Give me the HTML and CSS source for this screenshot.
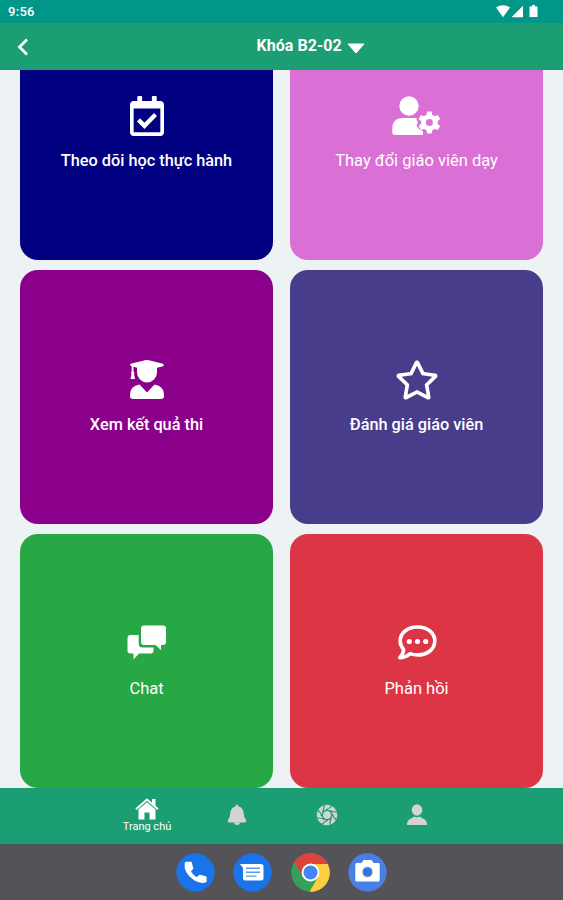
FILE: index.html
```html
<!DOCTYPE html>
<html lang="vi">
<head>
<meta charset="utf-8">
<title>Khóa B2-02</title>
<link rel="stylesheet" href="styles.css">
</head>
<body>
<div class="status">
  <span>9:56</span>
  <svg width="44" height="16" viewBox="0 0 44 16" fill="#fff">
    <path d="M0 3.400Q7 -1 14 3.400L7 13.300Z"/><path d="M15.500 13.300H27V1.800Z"/><path d="M33.500 2.500H36V1H39V2.500H41.500V13H33.500Z"/>
  </svg>
</div>
<header class="appbar">
  <svg class="back" width="12" height="18" viewBox="0 0 12 18"><path d="M10 1.500L2.500 9L10 16.500" fill="none" stroke="#fff" stroke-width="2.800"/></svg>
  <h1>Khóa B2-02</h1>
  <svg class="caret" width="18" height="11" viewBox="0 0 18 11"><path d="M1 1H17L9 10Z" fill="#fff" stroke="#fff" stroke-linejoin="round"/></svg>
</header>
<main class="content">
  <div class="grid">
    <a class="card navy">
      <svg width="34" height="40" viewBox="0 0 448 512" preserveAspectRatio="none" fill="#fff"><path d="M400 64h-48V12c0-7-5-12-12-12h-40c-7 0-12 5-12 12v52H160V12c0-7-5-12-12-12h-40c-7 0-12 5-12 12v52H48C21 64 0 85 0 112v352c0 27 21 48 48 48h352c27 0 48-21 48-48V112c0-27-21-48-48-48zm-6 400H54a6 6 0 0 1-6-6V160h352v298a6 6 0 0 1-6 6z"/><path d="M112 306L190 382L336 236" fill="none" stroke="#fff" stroke-width="56"/></svg>
      <span class="strong">Theo dõi học thực hành</span>
    </a>
    <a class="card orchid">
      <svg width="49" height="40" viewBox="0 0 49 40" fill="#fff"><circle cx="17" cy="10" r="9.700"/><path d="M10 22H24.500Q24 24 26 26L24.500 30L28 34L31 35V39H3Q.3 39 .3 36.500V32Q.5 22.500 10 22Z"/><path fill-rule="evenodd" d="M35.200 15.500H39.600L40.300 18.800L42.600 20.200L45.800 19.100L48.100 23L45.600 25.300V27.800L48.100 30L45.800 34L42.600 33L40.300 34.300L39.600 37.500H35.200L34.400 34.300L32.100 33L28.900 34L26.600 30L29.100 27.800V25.300L26.600 23L28.900 19.100L32.100 20.200L34.400 18.800ZM37.400 23A3.500 3.500 0 1 0 37.400 30A3.500 3.500 0 1 0 37.400 23Z"/></svg>
      <span>Thay đổi giáo viên dạy</span>
    </a>
    <a class="card purple">
      <svg width="36" height="40" viewBox="0 0 36 40" fill="#fff"><path d="M1.500 3.700L16 .3Q18 -.1 20 .3L34 3.700Q35.500 5 34 6.300L28 7.800V12.500A10 10 0 0 1 8 12.500V7.800L4.500 6.800V11.500Q6 12.500 5 14L6 19H1.500L2.500 14Q1.500 12.500 2.700 11.500V6.500Q.2 5 1.500 3.700Z"/><path d="M10.500 24.500L18 32.500L25.500 24.500Q35 26 35 35V36Q35 39 32 39H4Q1 39 1 36V35Q1 26 10.500 24.500Z"/></svg>
      <span class="strong">Xem kết quả thi</span>
    </a>
    <a class="card slate">
      <svg width="44" height="40" viewBox="0 0 576 512" fill="#fff"><path d="M528.1 171.500L382 150.200 316.700 17.800c-11.700-23.600-45.600-23.900-57.400 0L194 150.200 47.900 171.500c-26.200 3.800-36.700 36.100-17.700 54.600l105.700 103-25 145.500c-4.500 26.300 23.200 46 46.400 33.700L288 439.600l130.700 68.700c23.200 12.200 50.900-7.400 46.400-33.700l-25-145.500 105.700-103c19-18.500 8.500-50.800-17.700-54.600zM388.600 312.300l23.700 138.400L288 385.400l-124.300 65.300 23.700-138.400-100.600-98 139-20.200 62.200-126 62.200 126 139 20.200-100.600 98z"/></svg>
      <span class="strong">Đánh giá giáo viên</span>
    </a>
    <a class="card green">
      <svg width="40" height="40" viewBox="0 0 40 40" fill="#fff"><path d="M17 1.500H36Q39 1.500 39 4.500V18Q39 21 36 21H34V26L28.500 21H17Q14 21 14 18V4.500Q14 1.500 17 1.500Z"/><path d="M3.500 11H11.700V19.500Q11.700 23.500 15.500 23.500H26.500V26.500Q26.500 29.500 23.500 29.500H12L6.500 35.500V29.500H3.500Q.5 29.500 .5 26.500V14Q.5 11 3.500 11Z"/></svg>
      <span>Chat</span>
    </a>
    <a class="card red">
      <svg width="40" height="40" viewBox="0 0 40 40" fill="#fff"><path d="M20.500 3C30.500 3 37.800 9 37.800 17S30.500 31 20.500 31Q16.500 31 13.200 29.700Q8.500 33.700 2.700 33.700Q6.300 30.200 6.700 25.500Q3.200 21.800 3.200 17C3.200 9 10.500 3 20.500 3Z" fill="none" stroke="#fff" stroke-width="3.600" stroke-linejoin="round"/><circle cx="12.300" cy="17.500" r="2.600"/><circle cx="20.500" cy="17.500" r="2.600"/><circle cx="28.700" cy="17.500" r="2.600"/></svg>
      <span>Phản hồi</span>
    </a>
  </div>
</main>
<nav class="tabs">
  <a class="tab active">
    <svg width="24" height="22" viewBox="0 0 24 22" fill="#fff"><path d="M3.500 11.500L12 4.200L20.500 11.500V21.500H14.500V14.500H9.500V21.500H3.500Z"/><path d="M1 11.300L12 1.600L23 11.300" fill="none" stroke="#fff" stroke-width="2"/><path d="M17 1H20.500V8L17 5.500Z"/></svg>
    <span>Trang chủ</span>
  </a>
  <a class="tab"><svg width="20" height="22" viewBox="0 0 20 22" fill="#d3d3d3"><path d="M8.500 2.500Q8.500 .5 10 .5T11.500 2.500Q16.500 3.500 16.800 10Q17 14 18.800 15.500Q20 18 18 18.500H2Q0 18 1.200 15.500Q3 14 3.200 10Q3.500 3.500 8.500 2.500Z"/><path d="M6.500 18.500H13.500Q12.500 21 10 21T6.500 18.500Z"/></svg></a>
  <a class="tab"><svg width="22" height="22" viewBox="-11 -11 22 22"><circle r="7.800" fill="none" stroke="#d3d3d3" stroke-width="5"/><circle r="4" fill="#d3d3d3"/><path id="blade" d="M-1 -5.300Q3 -6.500 5.500 -10" fill="none" stroke="#1c9e75" stroke-width="1.200"/><use href="#blade" transform="rotate(45)"/><use href="#blade" transform="rotate(90)"/><use href="#blade" transform="rotate(135)"/><use href="#blade" transform="rotate(180)"/><use href="#blade" transform="rotate(225)"/><use href="#blade" transform="rotate(270)"/><use href="#blade" transform="rotate(315)"/><circle r="4.700" fill="none" stroke="#1c9e75"/></svg></a>
  <a class="tab"><svg width="22" height="22" viewBox="0 0 22 22" fill="#d3d3d3"><ellipse cx="11" cy="6" rx="5.300" ry="5.800"/><path d="M1 21Q1 15.500 6 14L8 12.500Q11 14 14 12.500L16 14Q21 15.500 21 21Z"/></svg></a>
</nav>
<footer class="dock">
  <svg width="39" height="39" viewBox="0 0 39 39"><circle cx="19.500" cy="19.500" r="19.200" fill="#1a73e8"/><path d="M10 9.500H15L16.500 15.500L13.800 18.500Q16.300 22.800 20.800 25.200L23.800 22.500L29.800 24V28.500Q25 30.500 18.500 26.500Q8 19.500 9.500 10Z" fill="#fff" stroke="#fff" stroke-width="1.600" stroke-linejoin="round"/></svg>
  <svg width="39" height="39" viewBox="0 0 39 39"><circle cx="19.500" cy="19.500" r="19.200" fill="#1a73e8"/><path d="M7 11H28Q30.500 11 30.500 13.500V25Q30.500 27.500 28 27.500H12.500Q10 27.500 10 25V15Z" fill="#fff"/><path d="M13 15.300H27M13 19.200H27M13 23.100H23.500" stroke="#5b98ec" stroke-width="1.400"/></svg>
  <svg width="39" height="39" viewBox="-19.500 -19.500 39 39"><circle r="19.300" fill="#34a05a"/><path d="M-16.700 -9.700A19.300 19.300 0 0 1 16.900 -9.400L17 -8.500H0L-8 4.200L-15.500 -9.500Z" fill="#db4437"/><path d="M0 -8.500H17.300A19.300 19.300 0 0 1 -1 19.300L7.500 4.500Z" fill="#ffcd40"/><circle r="8.900" fill="#fff"/><circle r="7" fill="#4285f4"/></svg>
  <svg width="39" height="39" viewBox="0 0 39 39"><circle cx="19.500" cy="19.500" r="19.200" fill="#4a7fe4"/><path d="M8.500 10H13.500L15.500 7H23.500L25.500 10H30.500Q31.700 10 31.700 11.500V27Q31.700 28.500 30.500 28.500H8.500Q7.300 28.500 7.300 27V11.500Q7.300 10 8.500 10Z" fill="#fff"/><circle cx="19.500" cy="19" r="6" fill="#e4e8f3"/><circle cx="19.500" cy="19" r="4.800" fill="#3477db"/></svg>
</footer>
</body>
</html>
```
FILE: styles.css
```css
* { box-sizing: border-box; }
body {
  margin: 0;
  width: 563px;
  height: 900px;
  display: flex;
  flex-direction: column;
  overflow: hidden;
  background: #edf2f5;
  color: #fff;
  font-family: Roboto, "Liberation Sans", sans-serif;
}
svg { display: block; flex: none; }
.status {
  height: 23px;
  flex: none;
  padding: 0 23.500px 0 8px;
  display: flex;
  align-items: center;
  justify-content: space-between;
  background: #009688;
  font-size: 13px;
  font-weight: 500;
  letter-spacing: .3px;
}
.appbar {
  height: 46.500px;
  flex: none;
  display: flex;
  align-items: center;
  background: #1c9e75;
}
.back { margin: 2px 0 0 17px; }
.appbar h1 {
  margin: 0 0 2px 227.500px;
  width: 86px;
  font-size: 16px;
  font-weight: 700;
  letter-spacing: .05px;
  white-space: nowrap;
}
.caret { margin: 5px 0 0 4px; }
.content {
  height: 718.500px;
  flex: none;
  overflow: hidden;
  display: flex;
  flex-direction: column;
  justify-content: flex-end;
  padding: 0 20px .2px;
}
.grid {
  display: grid;
  grid-template-columns: 253px 253px;
  grid-auto-rows: 254px;
  gap: 10.100px 17px;
}
.card {
  border-radius: 18px;
  padding-top: 90px;
  display: flex;
  flex-direction: column;
  align-items: center;
  gap: 14px;
  font-size: 16.500px;
  line-height: 22px;
  white-space: nowrap;
}
.strong { font-weight: 500; font-size: 16.300px; }
.navy { background: #000080; }
.orchid { background: #da70d6; }
.purple { background: #8b008b; }
.slate { background: #483d8b; }
.green { background: #28a745; }
.red { background: #dc3545; }
.tabs {
  height: 56px;
  flex: none;
  padding: 0 101px 0 102px;
  display: grid;
  grid-template-columns: repeat(4, 1fr);
  background: #1c9e75;
}
.tab {
  display: flex;
  flex-direction: column;
  align-items: center;
  justify-content: center;
  padding-bottom: 2px;
  font-size: 11px;
  line-height: 13px;
}
.dock {
  height: 56px;
  flex: none;
  display: flex;
  justify-content: center;
  align-items: center;
  gap: 18.600px;
  background: #545358;
}
```
